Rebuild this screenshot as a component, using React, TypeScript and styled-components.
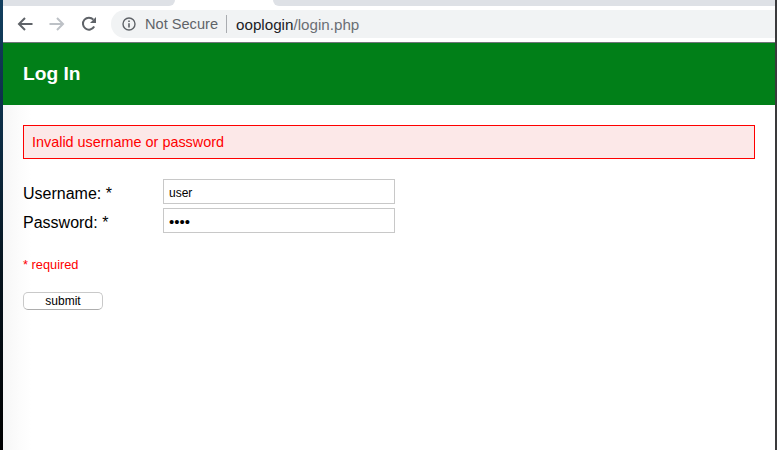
import React from "react";
import styled, { createGlobalStyle } from "styled-components";

const Global = createGlobalStyle`
  html, body { margin: 0; padding: 0; height: 100%; overflow: hidden; background: #fff; }
  #root { height: 100%; }
  * { box-sizing: border-box; }
`;

const Screen = styled.div`
  width: 777px;
  height: 450px;
  display: flex;
  font-family: "Liberation Sans", Arial, sans-serif;
  overflow: hidden;
`;

const DesktopLeft = styled.div`
  width: 3px;
  flex: none;
  background: linear-gradient(180deg, #123f5f 0%, #0c2c44 30%, #06141e 60%, #000 100%);
`;

const DesktopRight = styled.div`
  width: 2px;
  flex: none;
  background: #3a3a3c;
`;

const Browser = styled.div`
  flex: 1;
  min-width: 0;
  display: flex;
  flex-direction: column;
`;

const TabStrip = styled.div`
  height: 6px;
  flex: none;
  display: flex;
  background: #fff;
`;

const TabGap = styled.div<{ $side: "left" | "right" }>`
  background: #dee1e6;
  ${(p) =>
    p.$side === "left"
      ? "width: 172px; border-bottom-right-radius: 6px;"
      : "flex: 1; border-bottom-left-radius: 6px;"}
`;

const ActiveTab = styled.div`
  width: 98px;
  background: #fff;
`;

const Toolbar = styled.div`
  height: 36px;
  flex: none;
  display: flex;
  align-items: center;
  background: #fff;
  padding-left: 6px;
`;

const NavButton = styled.button`
  width: 32px;
  height: 28px;
  padding: 0;
  border: 0;
  background: none;
  display: flex;
  align-items: center;
  justify-content: center;
`;

const Omnibox = styled.div`
  flex: 1;
  height: 28px;
  margin-left: 6px;
  display: flex;
  align-items: center;
  padding-left: 11px;
  background: #f1f3f4;
  border-radius: 14px 0 0 14px;
  color: #5f6368;
`;

const InfoIcon = styled.svg`
  flex: none;
  margin-right: 9px;
`;

const Security = styled.span`
  font-size: 14.6px;
`;

const Separator = styled.span`
  width: 1px;
  height: 18px;
  margin: 0 9px 0 8px;
  background: #a9acb0;
`;

const Host = styled.span`
  color: #202124;
  font-size: 15.2px;
`;

const Path = styled.span`
  color: #6b6f74;
  font-size: 15.2px;
`;

const Header = styled.header`
  height: 63px;
  flex: none;
  display: flex;
  align-items: center;
  padding-left: 20px;
  background: #017f18;
  border-top: 1px solid #70757a;
`;

const Title = styled.h1`
  margin: 0;
  color: #fff;
  font-size: 19.2px;
  font-weight: bold;
`;

const Content = styled.main`
  flex: 1;
  padding: 20px 20px 0;
  background: linear-gradient(90deg, #f6f6f6 0, #fbfbfb 14px, #fff 28px);
`;

const Alert = styled.div`
  height: 34px;
  display: flex;
  align-items: center;
  padding-left: 8px;
  border: 1px solid #fe0000;
  background: #fce8e8;
  color: #fe0000;
  font-size: 14.4px;
`;

const LoginForm = styled.form`
  margin-top: 20px;
  display: flex;
  flex-direction: column;
  align-items: flex-start;
`;

const Field = styled.div`
  height: 25px;
  margin-bottom: 4px;
  display: flex;
  align-items: center;
`;

const Label = styled.label`
  width: 140px;
  padding-top: 4px;
  font-size: 16px;
  color: #000;
`;

const Input = styled.input<{ $dots?: boolean }>`
  width: 232px;
  height: 25px;
  padding: 2px 5px 0;
  border: 1px solid #c8c8c8;
  border-radius: 0;
  outline: none;
  background: #fff;
  color: #000;
  font-family: "Liberation Sans", Arial, sans-serif;
  font-size: ${(p) => (p.$dots ? "15px" : "12px")};
`;

const Required = styled.p`
  margin: 21px 0 0;
  color: #fe0000;
  font-size: 12.8px;
  line-height: 14px;
`;

const Submit = styled.button`
  width: 80px;
  height: 18px;
  margin-top: 20px;
  padding: 0;
  border: 1px solid #c9c9c9;
  border-bottom-color: #adadad;
  border-radius: 5px;
  background: #fff;
  color: #000;
  font-family: "Liberation Sans", Arial, sans-serif;
  font-size: 12px;
`;

export default function App() {
  return (
    <>
      <Global />
      <Screen>
        <DesktopLeft />
        <Browser>
          <TabStrip>
            <TabGap $side="left" />
            <ActiveTab />
            <TabGap $side="right" />
          </TabStrip>
          <Toolbar>
            <NavButton aria-label="Back">
              <svg width="16" height="16" viewBox="0 0 16 16" fill="none" stroke="#5f6368" strokeWidth="2">
                <path d="M15.5 8H2M8 2 2 8l6 6" />
              </svg>
            </NavButton>
            <NavButton aria-label="Forward">
              <svg width="16" height="16" viewBox="0 0 16 16" fill="none" stroke="#bdc1c6" strokeWidth="2">
                <path d="M.5 8H14M8 2l6 6-6 6" />
              </svg>
            </NavButton>
            <NavButton aria-label="Reload">
              <svg width="16" height="16" viewBox="0 0 16 16" fill="none">
                <path d="M13.2 10.6A6 6 0 1 1 12.4 3.6" stroke="#5f6368" strokeWidth="2" />
                <path d="M15 1v6H9z" fill="#5f6368" />
              </svg>
            </NavButton>
            <Omnibox>
              <InfoIcon width="14" height="14" viewBox="0 0 14 14" fill="none">
                <circle cx="7" cy="7" r="6" stroke="#5f6368" strokeWidth="1.4" />
                <path d="M6.2 3.4h1.6V5H6.2zM6.2 6.2h1.6v4.4H6.2z" fill="#5f6368" />
              </InfoIcon>
              <Security>Not Secure</Security>
              <Separator />
              <Host>ooplogin</Host>
              <Path>/login.php</Path>
            </Omnibox>
          </Toolbar>
          <Header>
            <Title>Log In</Title>
          </Header>
          <Content>
            <Alert>Invalid username or password</Alert>
            <LoginForm>
              <Field>
                <Label htmlFor="username">Username: *</Label>
                <Input id="username" type="text" defaultValue="user" />
              </Field>
              <Field>
                <Label htmlFor="password">Password: *</Label>
                <Input $dots id="password" type="password" defaultValue="pass" />
              </Field>
              <Required>* required</Required>
              <Submit type="button">submit</Submit>
            </LoginForm>
          </Content>
        </Browser>
        <DesktopRight />
      </Screen>
    </>
  );
}
